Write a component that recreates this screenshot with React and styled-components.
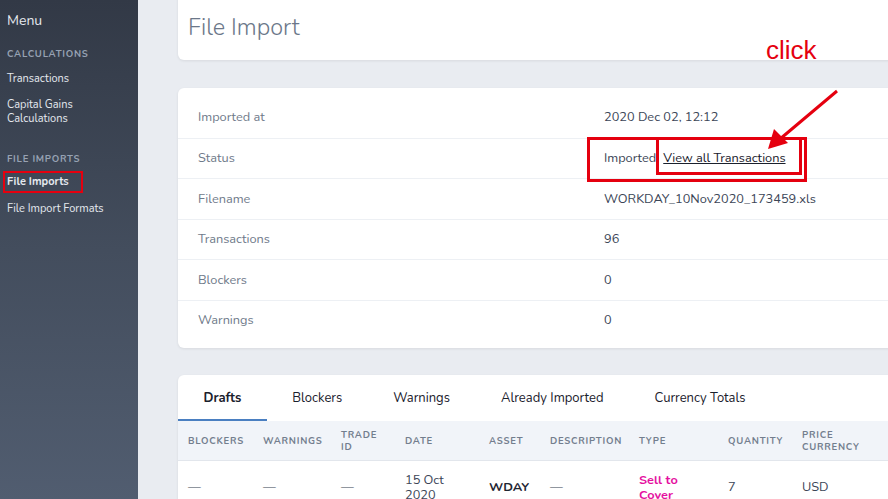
import React from "react";
import styled, { createGlobalStyle } from "styled-components";

const Global = createGlobalStyle`
  html, body { margin: 0; padding: 0; }
  body {
    background: #e9ecf1;
    font-family: "Nunito", "Open Sans", "Noto Sans", sans-serif;
    overflow: hidden;
  }
  * { box-sizing: border-box; }
`;

const Page = styled.div`
  position: relative;
  display: flex;
  width: 888px;
  height: 499px;
  overflow: hidden;
`;

const Sidebar = styled.nav`
  flex: 0 0 138px;
  height: 100%;
  background: linear-gradient(180deg, #323946 0%, #434d5d 50%, #515d70 100%);
  padding: 13px 7px;
  display: flex;
  flex-direction: column;
  color: #e2e8f0;
`;

const MenuTitle = styled.div`
  font-size: 14px;
  line-height: 16px;
  color: #e5e9ef;
`;

const SectionTitle = styled.div`
  margin-top: ${(p) => p.$mt}px;
  font-size: 9.5px;
  line-height: 12px;
  font-weight: 700;
  letter-spacing: 0.08em;
  color: #97a2b3;
  text-transform: uppercase;
`;

const NavLink = styled.a`
  display: block;
  margin-top: ${(p) => p.$mt}px;
  font-size: 11px;
  line-height: 14px;
  color: #e5e9ef;
  font-weight: ${(p) => (p.$active ? 700 : 400)};
  text-decoration: none;
`;

const Main = styled.main`
  flex: 1;
  min-width: 0;
  padding-left: 40px;
  display: flex;
  flex-direction: column;
  gap: 28px;
`;

const Card = styled.section`
  width: 780px;
  flex: none;
  background: #fff;
  border-radius: 6px;
  box-shadow: 0 1px 3px rgba(0, 0, 0, 0.08);
`;

const HeaderCard = styled(Card)`
  height: 70px;
  margin-top: -10px;
  padding: 10px 10px 6px;
  display: flex;
  align-items: center;
`;

const Title = styled.h1`
  margin: 0;
  font-size: 23.5px;
  line-height: 30px;
  font-weight: 300;
  color: #6b7789;
`;

const InfoCard = styled(Card)`
  padding: 9px 0 8px;
`;

const InfoRow = styled.div`
  display: grid;
  grid-template-columns: 406px 1fr;
  height: 40.5px;
  align-items: center;
  border-top: ${(p) => (p.$first ? "none" : "1px solid #edf0f4")};
  font-size: 12.75px;
`;

const Label = styled.div`
  padding-left: 20px;
  color: #6f7a8a;
`;

const Value = styled.div`
  padding-left: 20px;
  color: #3b4556;
  display: flex;
  gap: 7px;
`;

const Link = styled.a`
  color: #1a202c;
  text-decoration: underline;
`;

const TableCard = styled(Card)`
  margin-top: -1px;
  border-radius: 6px 6px 0 0;
  overflow: hidden;
`;

const Tabs = styled.div`
  display: flex;
  height: 46px;
`;

const Tab = styled.div`
  padding: 2px 25.5px 0;
  display: flex;
  align-items: center;
  font-size: 13px;
  color: #1a202c;
  font-weight: ${(p) => (p.$active ? 700 : 400)};
  border-bottom: 2px solid ${(p) => (p.$active ? "#4a7fc1" : "transparent")};
`;

const COLS = "75px 78px 64px 84px 61px 89px 89px 74px 86px 1fr";

const HeadRow = styled.div`
  display: grid;
  grid-template-columns: ${COLS};
  height: 40px;
  padding-top: 1px;
  align-items: center;
  background: #f1f4f9;
  border-bottom: 1px solid #e2e6ec;
`;

const Th = styled.div`
  padding: 0 10px;
  font-size: 9.5px;
  line-height: 12px;
  font-weight: 700;
  letter-spacing: 0.08em;
  color: #737e8e;
  text-transform: uppercase;
`;

const BodyRow = styled.div`
  display: grid;
  grid-template-columns: ${COLS};
  align-items: center;
  padding: 12px 0 10px;
`;

const Td = styled.div`
  padding: 0 10px;
  font-size: 12.75px;
  line-height: 14.5px;
  color: ${(p) => p.$color || "#3b4556"};
  font-weight: ${(p) => (p.$bold ? 700 : 400)};
`;

const Box = styled.div`
  position: absolute;
  border: ${(p) => p.$w || 3}px solid #e5000f;
  pointer-events: none;
`;

const ClickText = styled.div`
  position: absolute;
  left: 766px;
  top: 35px;
  font-family: "Liberation Sans", Arial, sans-serif;
  font-size: 26px;
  line-height: 30px;
  color: #e5000f;
`;

const ArrowSvg = styled.svg`
  position: absolute;
  left: 0;
  top: 0;
  pointer-events: none;
`;

export default function App() {
  const rows = [
    ["Imported at", "2020 Dec 02, 12:12"],
    ["Status", null],
    ["Filename", "WORKDAY_10Nov2020_173459.xls"],
    ["Transactions", "96"],
    ["Blockers", "0"],
    ["Warnings", "0"],
  ];
  return (
    <>
      <Global />
      <Page>
        <Sidebar>
          <MenuTitle>Menu</MenuTitle>
          <SectionTitle $mt={19}>Calculations</SectionTitle>
          <NavLink $mt={12}>Transactions</NavLink>
          <NavLink $mt={12}>
            Capital Gains
            <br />
            Calculations
          </NavLink>
          <SectionTitle $mt={27}>File Imports</SectionTitle>
          <NavLink $mt={10} $active>
            File Imports
          </NavLink>
          <NavLink $mt={13}>File Import Formats</NavLink>
        </Sidebar>
        <Main>
          <HeaderCard>
            <Title>File Import</Title>
          </HeaderCard>
          <InfoCard>
            {rows.map(([l, v], i) => (
              <InfoRow key={l} $first={i === 0}>
                <Label>{l}</Label>
                <Value>
                  {v !== null ? (
                    v
                  ) : (
                    <>
                      <span>Imported</span>
                      <Link>View all Transactions</Link>
                    </>
                  )}
                </Value>
              </InfoRow>
            ))}
          </InfoCard>
          <TableCard>
            <Tabs>
              <Tab $active>Drafts</Tab>
              <Tab>Blockers</Tab>
              <Tab>Warnings</Tab>
              <Tab>Already Imported</Tab>
              <Tab>Currency Totals</Tab>
            </Tabs>
            <HeadRow>
              <Th>Blockers</Th>
              <Th>Warnings</Th>
              <Th>Trade ID</Th>
              <Th>Date</Th>
              <Th>Asset</Th>
              <Th>Description</Th>
              <Th>Type</Th>
              <Th>Quantity</Th>
              <Th>Price Currency</Th>
            </HeadRow>
            <BodyRow>
              <Td>—</Td>
              <Td>—</Td>
              <Td>—</Td>
              <Td>15 Oct 2020</Td>
              <Td $bold $color="#1f2633">WDAY</Td>
              <Td>—</Td>
              <Td $bold $color="#e5119f">Sell to Cover</Td>
              <Td>7</Td>
              <Td>USD</Td>
            </BodyRow>
          </TableCard>
        </Main>

        <Box $w={2.5} style={{ left: 3, top: 171, width: 80, height: 22 }} />
        <Box style={{ left: 587, top: 137, width: 220, height: 45 }} />
        <Box style={{ left: 656, top: 137, width: 146, height: 38 }} />
        <ClickText>click</ClickText>
        <ArrowSvg width="888" height="499" viewBox="0 0 888 499">
          <line x1="837" y1="91" x2="780" y2="139" stroke="#e5000f" strokeWidth="3" />
          <polygon points="768,149 774,129 788,143" fill="#e5000f" />
        </ArrowSvg>
      </Page>
    </>
  );
}
